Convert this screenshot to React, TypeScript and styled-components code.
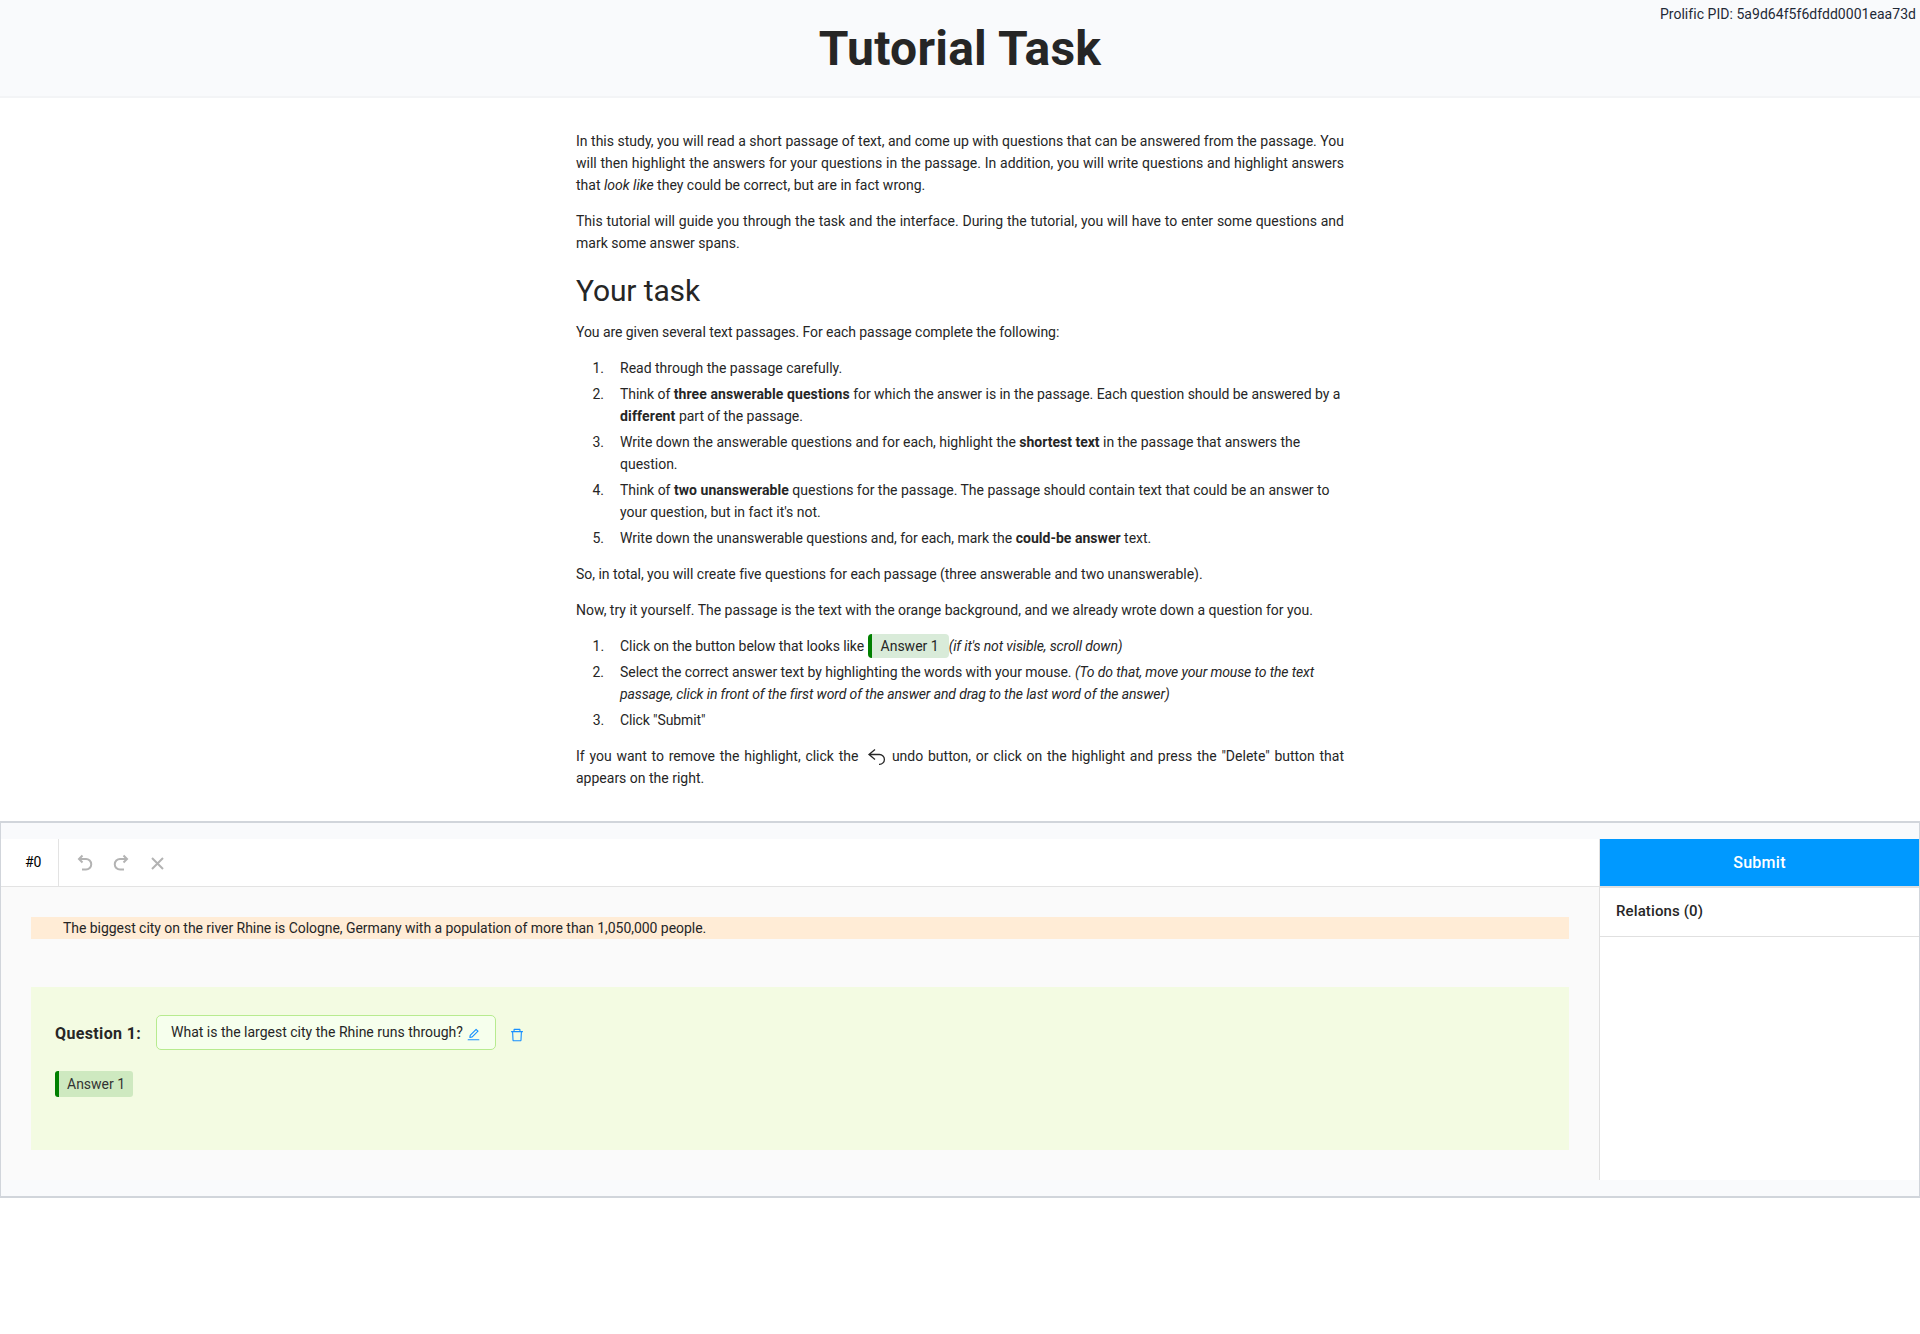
import React from "react";
import styled, { createGlobalStyle } from "styled-components";
import { AiOutlineEdit, AiOutlineDelete } from "react-icons/ai";

const Global = createGlobalStyle`
  *, *::before, *::after { box-sizing: border-box; }
  body {
    margin: 0;
    background: #fff;
    color: #262626;
    font: 14px/22px Roboto, "Liberation Sans", sans-serif;
  }
`;

const Header = styled.header`
  position: relative;
  height: 98px;
  display: flex;
  justify-content: center;
  background: #f9fafc;
  border-bottom: 2px solid #f3f4f6;
`;
const Title = styled.h1`
  margin: 25px 0 0;
  font-size: 48px;
  line-height: 48px;
  font-weight: 700;
  letter-spacing: 0.25px;
`;
const Participant = styled.div`
  position: absolute;
  top: 3px;
  right: 4px;
  color: #1f2937;
  letter-spacing: 0.04px;
`;

const Article = styled.main`
  width: 768px;
  margin: 0 auto;
  padding: 32px 0;
`;
const Paragraph = styled.p<{ $tracking?: number }>`
  margin: 0 0 14px;
  text-align: justify;
  letter-spacing: ${(p) => p.$tracking ?? 0}px;
  &:last-child { margin-bottom: 0; }
`;
const Heading = styled.h2`
  margin: 18px 0 12px;
  font-size: 30px;
  line-height: 37px;
  font-weight: 400;
  letter-spacing: -0.12px;
`;
const Steps = styled.ol`
  margin: 0 0 14px;
  padding: 0;
  list-style: none;
  counter-reset: step;
  display: grid;
  gap: 4px;
`;
const Step = styled.li<{ $tracking?: number }>`
  counter-increment: step;
  display: grid;
  grid-template-columns: 28px 1fr;
  column-gap: 16px;
  letter-spacing: ${(p) => p.$tracking ?? -0.02}px;
  &::before {
    content: counter(step) ".";
    text-align: right;
  }
`;
const Strong = styled.b<{ $tracking?: number }>`
  letter-spacing: ${(p) => p.$tracking ?? 0}px;
`;
const Aside = styled.i`
  letter-spacing: -0.12px;
`;
const Sample = styled.span`
  padding: 4px 10px 4px 9px;
  border-left: 4px solid #008000;
  border-radius: 4px;
  background: #d9ebd9;
  letter-spacing: 0;
`;
const InlineUndo = styled.svg`
  width: 20px;
  height: 20px;
  margin: 0 1px 0 3px;
  vertical-align: -6px;
`;

const Workspace = styled.section`
  border: solid #d1d5db;
  border-width: 2px 1px;
  padding: 16px 0;
  background: #f9fafc;
  display: grid;
  grid-template-columns: 1fr 320px;
  height: 377px;
`;
const Editor = styled.div`
  display: flex;
  flex-direction: column;
  background: #fafafa;
`;
const Toolbar = styled.div`
  height: 48px;
  display: flex;
  background: #fff;
  border-bottom: 1px solid #e3e3e3;
`;
const TaskNumber = styled.div`
  width: 58px;
  padding-left: 24px;
  line-height: 46px;
  color: #000;
  border-right: 1px solid #e3e3e3;
`;
const Tools = styled.div`
  display: flex;
  align-items: center;
  gap: 16px;
  padding-left: 16px;
`;
const ToolIcon = styled.svg`
  display: block;
  width: 20px;
  height: 20px;
  fill: none;
  stroke: #b3b3b3;
  stroke-width: 2;
`;
const Body = styled.div`
  display: grid;
  gap: 48px;
  padding: 30px 30px 0;
`;
const Passage = styled.div`
  padding-left: 32px;
  background: #ffecd6;
  letter-spacing: -0.045px;
`;
const QuestionCard = styled.div`
  height: 163px;
  padding: 28px 24px;
  background: #f3fbe2;
`;
const QuestionRow = styled.div`
  display: flex;
  align-items: center;
  height: 35px;
`;
const QuestionLabel = styled.span`
  width: 101px;
  padding-top: 2px;
  font-size: 16px;
  font-weight: 700;
  letter-spacing: 0.36px;
`;
const QuestionBox = styled.div`
  display: flex;
  width: 340px;
  height: 35px;
  padding: 5px 14px;
  border: 1px solid #b7eb8f;
  border-radius: 5px;
  background: #f6ffed;
`;
const EditIcon = styled(AiOutlineEdit)`
  width: 15px;
  height: 15px;
  margin: 6px 0 0 3px;
  color: #1890ff;
`;
const TrashIcon = styled(AiOutlineDelete)`
  width: 16px;
  height: 16px;
  margin: 5px 0 0 13px;
  color: #1890ff;
`;
const AnswerChip = styled.button`
  display: block;
  width: 78px;
  height: 26px;
  margin-top: 21px;
  padding: 0 0 0 8px;
  border: 0;
  border-left: 4px solid #008000;
  border-radius: 3px;
  background: #cee9c0;
  color: #333;
  font: inherit;
  text-align: left;
`;

const Side = styled.aside`
  display: flex;
  flex-direction: column;
  background: #fff;
  border-left: 1px solid #e0e0e0;
`;
const Submit = styled.button`
  height: 47px;
  padding: 0;
  border: 0;
  background: #0099ff;
  color: #fff;
  font: 500 16px/47px Roboto, sans-serif;
  letter-spacing: 0.25px;
`;
const Relations = styled.div`
  height: 51px;
  padding-left: 16px;
  border: solid #e0e0e0;
  border-width: 2px 0 1px;
  font-size: 15px;
  font-weight: 500;
  line-height: 47px;
  letter-spacing: 0.12px;
`;

export default function App() {
  return (
    <>
      <Global />
      <Header>
        <Title>Tutorial Task</Title>
        <Participant>Prolific PID: 5a9d64f5f6dfdd0001eaa73d</Participant>
      </Header>
      <Article>
        <Paragraph>
          In this study, you will read a short passage of text, and come up with questions that can be answered from
          the passage. You will then highlight the answers for your questions in the passage. In addition, you will
          write questions and highlight answers that <i>look like</i> they could be correct, but are in fact wrong.
        </Paragraph>
        <Paragraph>
          This tutorial will guide you through the task and the interface. During the tutorial, you will have to enter
          some questions and mark some answer spans.
        </Paragraph>
        <Heading>Your task</Heading>
        <Paragraph $tracking={-0.06}>
          You are given several text passages. For each passage complete the following:
        </Paragraph>
        <Steps>
          <Step $tracking={0}><span>Read through the passage carefully.</span></Step>
          <Step $tracking={-0.04}>
            <span>
              Think of <Strong $tracking={0.1}>three answerable questions</Strong> for which the answer is in the
              passage. Each question should be answered by a <Strong $tracking={0.15}>different</Strong> part of the
              passage.
            </span>
          </Step>
          <Step>
            <span>
              Write down the answerable questions and for each, highlight the <Strong>shortest text</Strong> in the
              passage that answers the question.
            </span>
          </Step>
          <Step>
            <span>
              Think of <Strong $tracking={0.06}>two unanswerable</Strong> questions for the passage. The passage
              should contain text that could be an answer to your question, but in fact it's not.
            </span>
          </Step>
          <Step>
            <span>
              Write down the unanswerable questions and, for each, mark the{" "}
              <Strong $tracking={0.03}>could-be answer</Strong> text.
            </span>
          </Step>
        </Steps>
        <Paragraph $tracking={-0.02}>
          So, in total, you will create five questions for each passage (three answerable and two unanswerable).
        </Paragraph>
        <Paragraph>
          Now, try it yourself. The passage is the text with the orange background, and we already wrote down a
          question for you.
        </Paragraph>
        <Steps>
          <Step $tracking={-0.07}>
            <span>
              Click on the button below that looks like <Sample>Answer 1</Sample>
              <Aside>(if it's not visible, scroll down)</Aside>
            </span>
          </Step>
          <Step $tracking={-0.03}>
            <span>
              Select the correct answer text by highlighting the words with your mouse.{" "}
              <Aside>
                (To do that, move your mouse to the text passage, click in front of the first word of the answer and
                drag to the last word of the answer)
              </Aside>
            </span>
          </Step>
          <Step $tracking={-0.12}><span>Click "Submit"</span></Step>
        </Steps>
        <Paragraph>
          If you want to remove the highlight, click the{" "}
          <InlineUndo viewBox="0 0 20 20" fill="none" stroke="#262626" strokeWidth="1.3">
            <path d="M9 2.500 3 7.500 9 12.500M3 7.500H13.500a4.900 4.900 0 0 1 0 9.800h-.5" />
          </InlineUndo>{" "}
          undo button, or click on the highlight and press the "Delete" button that appears on the right.
        </Paragraph>
      </Article>
      <Workspace>
        <Editor>
          <Toolbar>
            <TaskNumber>#0</TaskNumber>
            <Tools>
              <ToolIcon viewBox="0 0 20 20">
                <path d="M7.500 2.500 4 6l3.500 3.500M4 6h7a5 5 0 0 1 0 10.500H7" />
              </ToolIcon>
              <ToolIcon viewBox="0 0 20 20">
                <path d="M12.500 2.500 16 6l-3.500 3.500M16 6H9a5 5 0 0 0 0 10.500H13" />
              </ToolIcon>
              <ToolIcon viewBox="0 0 20 20">
                <path d="M5 5 16 16M16 5 5 16" />
              </ToolIcon>
            </Tools>
          </Toolbar>
          <Body>
            <Passage>
              The biggest city on the river Rhine is Cologne, Germany with a population of more than 1,050,000 people.
            </Passage>
            <QuestionCard>
              <QuestionRow>
                <QuestionLabel>Question 1:</QuestionLabel>
                <QuestionBox>
                  What is the largest city the Rhine runs through?
                  <EditIcon />
                </QuestionBox>
                <TrashIcon />
              </QuestionRow>
              <AnswerChip>Answer 1</AnswerChip>
            </QuestionCard>
          </Body>
        </Editor>
        <Side>
          <Submit>Submit</Submit>
          <Relations>Relations (0)</Relations>
        </Side>
      </Workspace>
    </>
  );
}
